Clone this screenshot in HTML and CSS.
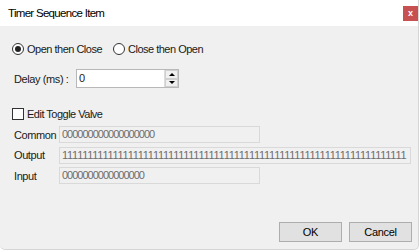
FILE: index.html
```html
<!DOCTYPE html>
<html>
<head>
<meta charset="utf-8">
<link rel="stylesheet" href="styles.css">
</head>
<body>
<div class="window">
  <div class="titlebar">
    <span class="title">Timer Sequence Item</span>
    <span class="close">x</span>
  </div>
  <div class="content">
    <div class="radios">
      <div class="radio first"><span class="circle on"></span><span class="lbl">Open then Close</span></div>
      <div class="radio"><span class="circle"></span><span class="lbl">Close then Open</span></div>
    </div>
    <div class="delay">
      <span class="dlabel">Delay (ms) :</span>
      <div class="numbox">
        <span class="numval">0</span>
        <div class="spin">
          <span class="sbtn"><span class="up"></span></span>
          <span class="sbtn"><span class="down"></span></span>
        </div>
      </div>
    </div>
    <div class="check"><span class="cbox"></span><span class="lbl">Edit Toggle Valve</span></div>
    <div class="fields">
      <span class="flabel">Common</span><div class="field short">000000000000000000</div>
      <span class="flabel">Output</span><div class="field long">11111111111111111111111111111111111111111111111111111111111111111111</div>
      <span class="flabel">Input</span><div class="field short">0000000000000000</div>
    </div>
    <div class="buttons">
      <button class="btn">OK</button>
      <button class="btn">Cancel</button>
    </div>
  </div>
</div>
</body>
</html>
```
FILE: styles.css
```css
html, body {
  margin: 0;
  padding: 0;
  background: #ffffff;
}
.window {
  width: 419px;
  height: 250px;
  background: #f0f0f0;
  display: flex;
  flex-direction: column;
  border-radius: 0 0 5px 5px;
  box-sizing: border-box;
  border-right: 1px solid #d6d6d6;
  border-bottom: 1px solid #d6d6d6;
  overflow: hidden;
  font-family: "Liberation Sans", Arial, sans-serif;
  font-size: 11px;
  color: #1a1a1a;
}
.titlebar {
  height: 26px;
  flex: none;
  background: #ffffff;
  display: flex;
  justify-content: space-between;
  align-items: flex-start;
}
.title {
  margin: 6px 0 0 8px;
  font-size: 11.5px;
  letter-spacing: -0.7px;
  color: #000;
  line-height: 14px;
}
.close {
  width: 15px;
  height: 15px;
  margin-top: 6px;
  background: #c75050;
  color: #fff;
  font-size: 9px;
  font-weight: bold;
  line-height: 14px;
  text-align: center;
}
.content {
  flex: 1;
  display: flex;
  flex-direction: column;
  padding-left: 12px;
}
.lbl {
  letter-spacing: -0.5px;
  line-height: 12px;
}
.radios {
  margin-top: 17px;
  display: flex;
  align-items: center;
  height: 12px;
}
.radio {
  display: flex;
  align-items: center;
  gap: 3px;
}
.radio.first {
  width: 101px;
}
.circle {
  width: 12px;
  height: 12px;
  box-sizing: border-box;
  border: 1px solid #333;
  border-radius: 50%;
  background: #fff;
  display: flex;
  align-items: center;
  justify-content: center;
}
.circle.on::after {
  content: "";
  width: 6px;
  height: 6px;
  border-radius: 50%;
  background: #222;
}
.delay {
  margin-top: 14px;
  display: flex;
  align-items: center;
  height: 19px;
}
.dlabel {
  width: 64px;
  padding-left: 2px;
  box-sizing: border-box;
  letter-spacing: -0.4px;
}
.numbox {
  width: 103px;
  height: 19px;
  box-sizing: border-box;
  border: 1px solid #b8b8b8;
  background: #fff;
  display: flex;
  justify-content: space-between;
}
.numval {
  padding-left: 2px;
  line-height: 16px;
}
.spin {
  width: 13px;
  display: flex;
  flex-direction: column;
  border-left: 1px solid #dcdcdc;
}
.sbtn {
  flex: 1;
  background: #f0f0f0;
  border: 1px solid #d0d0d0;
  display: flex;
  align-items: center;
  justify-content: center;
}
.up {
  width: 0;
  height: 0;
  border-left: 3px solid transparent;
  border-right: 3px solid transparent;
  border-bottom: 3px solid #000;
}
.down {
  width: 0;
  height: 0;
  border-left: 3px solid transparent;
  border-right: 3px solid transparent;
  border-top: 3px solid #000;
}
.check {
  margin-top: 20px;
  display: flex;
  align-items: center;
  gap: 3px;
  height: 12px;
}
.cbox {
  width: 12px;
  height: 12px;
  box-sizing: border-box;
  border: 1px solid #333;
  background: #fff;
}
.fields {
  margin-top: 6px;
  display: grid;
  grid-template-columns: 47px auto;
  grid-auto-rows: 17px;
  row-gap: 3.5px;
  align-items: center;
  justify-items: start;
}
.flabel {
  padding-left: 2px;
  letter-spacing: -0.4px;
  color: #1a1a1a;
}
.field {
  height: 17px;
  box-sizing: border-box;
  border: 1px solid #d9d9d9;
  background: #f0f0f0;
  color: #6d6d6d;
  line-height: 15px;
  padding-left: 2px;
  letter-spacing: -1px;
  overflow: hidden;
  white-space: nowrap;
}
.field.long {
  letter-spacing: -0.25px;
}
.field.short {
  width: 201px;
}
.field.long {
  width: 352px;
}
.buttons {
  margin-top: auto;
  margin-bottom: 7px;
  display: flex;
  justify-content: flex-end;
  gap: 7px;
  padding-right: 6px;
}
.btn {
  width: 63px;
  height: 20px;
  margin: 0;
  padding: 0;
  background: #e1e1e1;
  border: 1px solid #adadad;
  font-family: "Liberation Sans", Arial, sans-serif;
  font-size: 11px;
  letter-spacing: -0.3px;
  color: #000;
}
```
